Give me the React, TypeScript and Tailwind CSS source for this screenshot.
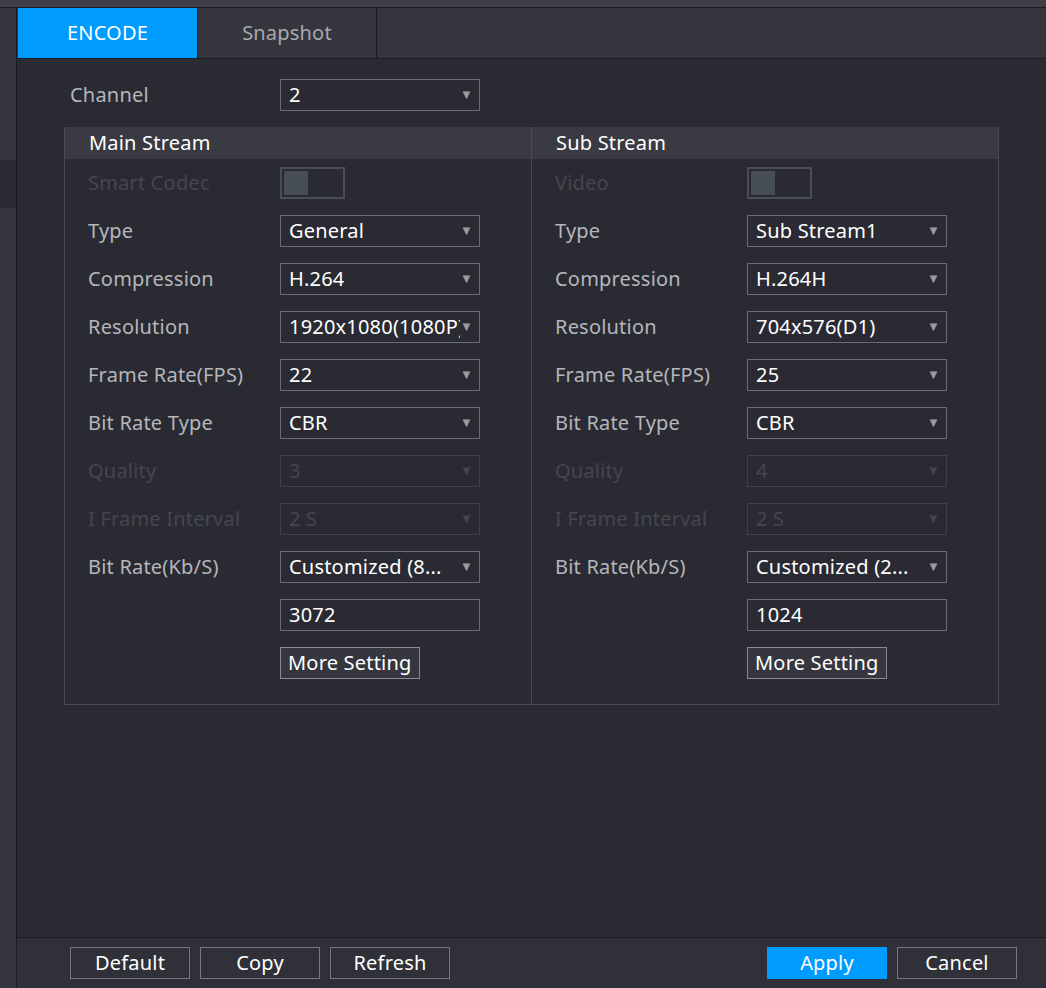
import React from 'react';

type Row = { label: string; kind: 'toggle' | 'select' | 'input' | 'button'; value?: string; disabled?: boolean };

const mainRows: Row[] = [
    { label: 'Smart Codec', kind: 'toggle', disabled: true },
    { label: 'Type', kind: 'select', value: 'General' },
    { label: 'Compression', kind: 'select', value: 'H.264' },
    { label: 'Resolution', kind: 'select', value: '1920x1080(1080P)' },
    { label: 'Frame Rate(FPS)', kind: 'select', value: '22' },
    { label: 'Bit Rate Type', kind: 'select', value: 'CBR' },
    { label: 'Quality', kind: 'select', value: '3', disabled: true },
    { label: 'I Frame Interval', kind: 'select', value: '2 S', disabled: true },
    { label: 'Bit Rate(Kb/S)', kind: 'select', value: 'Customized (8...' },
    { label: '', kind: 'input', value: '3072' },
    { label: '', kind: 'button', value: 'More Setting' },
];

const subRows: Row[] = [
    { label: 'Video', kind: 'toggle', disabled: true },
    { label: 'Type', kind: 'select', value: 'Sub Stream1' },
    { label: 'Compression', kind: 'select', value: 'H.264H' },
    { label: 'Resolution', kind: 'select', value: '704x576(D1)' },
    { label: 'Frame Rate(FPS)', kind: 'select', value: '25' },
    { label: 'Bit Rate Type', kind: 'select', value: 'CBR' },
    { label: 'Quality', kind: 'select', value: '4', disabled: true },
    { label: 'I Frame Interval', kind: 'select', value: '2 S', disabled: true },
    { label: 'Bit Rate(Kb/S)', kind: 'select', value: 'Customized (2...' },
    { label: '', kind: 'input', value: '1024' },
    { label: '', kind: 'button', value: 'More Setting' },
];

const Select = ({ value, disabled }: { value: string; disabled?: boolean }) => (
    <div className={`w-[200px] h-[32px] border flex items-center pl-[8px] pr-[6px] ${disabled ? 'border-[#3f4048] text-[#45464e]' : 'border-[#6c6d74] text-white'}`}>
        <span className="flex-1 whitespace-nowrap overflow-hidden">{value}</span>
        <span className={`text-[13px] ${disabled ? 'text-[#45464e]' : 'text-[#9a9ba1]'}`}>▼</span>
    </div>
);

const Control = ({ row }: { row: Row }) => {
    if (row.kind === 'toggle')
        return (
            <div className="w-[65px] h-[32px] border-2 border-[#4a4d55] flex p-[2px]">
                <div className="w-[24px] h-full bg-[#474d55]"></div>
            </div>
        );
    if (row.kind === 'input')
        return <div className="w-[200px] h-[32px] border border-[#6c6d74] text-white flex items-center pl-[8px]">{row.value}</div>;
    if (row.kind === 'button')
        return <div className="h-[32px] px-[7px] border border-[#8a8b91] bg-[#35363e] text-white flex items-center">{row.value}</div>;
    return <Select value={row.value!} disabled={row.disabled} />;
};

const Column = ({ title, rows, border }: { title: string; rows: Row[]; border?: boolean }) => (
    <div className={`flex-1 pb-[25px] ${border ? 'border-r border-[#4a4b52]' : ''}`}>
        <div className="h-[32px] bg-[#393a42] pl-[24px] flex items-center text-white">{title}</div>
        <div className="flex flex-col gap-[16px] pt-[8px]">
            {rows.map((r, i) => (
                <div key={i} className="flex items-center h-[32px]">
                    <div className={`w-[215px] pl-[23px] whitespace-nowrap ${r.disabled ? 'text-[#45464e]' : 'text-[#b5b6bb]'}`}>{r.label}</div>
                    <Control row={r} />
                </div>
            ))}
        </div>
    </div>
);

const Btn = ({ label, primary }: { label: string; primary?: boolean }) => (
    <div className={`w-[120px] h-[32px] flex items-center justify-center border ${primary ? 'bg-[#009bff] border-[#009bff]' : 'bg-[#2f3038] border-[#77787e]'} text-white`}>{label}</div>
);

export default function App() {
    return (
        <div className="w-[1046px] h-[988px] bg-[#35363e] flex text-[20px] tracking-[0.2px] overflow-hidden" style={{ fontFamily: '"Noto Sans", sans-serif' }}>
            <div className="w-[16px] flex flex-col pt-[160px] shrink-0">
                <div className="h-[48px] bg-[#2a2a33]"></div>
            </div>
            <div className="w-px bg-[#1c1d22]"></div>
            <div className="flex-1 flex flex-col">
                <div className="h-[8px] bg-[#3d3e46] border-b border-[#1c1d22] -ml-[17px]"></div>
                <div className="h-[51px] flex bg-[#34353d] border-b border-[#1c1d22]">
                    <div className="w-[179px] bg-[#009bff] text-white flex items-center justify-center ml-px">ENCODE</div>
                    <div className="w-[180px] text-[#a8a9ae] flex items-center justify-center border-l border-r border-[#1c1d22]">Snapshot</div>
                </div>
                <div className="flex-1 bg-[#2a2a33] pl-[47px] pr-[47px]">
                    <div className="flex items-center h-[32px] mt-[20px]">
                        <div className="w-[216px] pl-[6px] text-[#b5b6bb]">Channel</div>
                        <Select value="2" />
                    </div>
                    <div className="mt-[16px] border border-[#4a4b52] border-t-0 flex w-[935px]">
                        <Column title="Main Stream" rows={mainRows} border />
                        <Column title="Sub Stream" rows={subRows} />
                    </div>
                </div>
                <div className="h-[51px] bg-[#2f3038] border-t border-[#1c1d22] flex items-center pl-[53px] pr-[29px] gap-[10px]">
                    <Btn label="Default" />
                    <Btn label="Copy" />
                    <Btn label="Refresh" />
                    <div className="flex-1"></div>
                    <Btn label="Apply" primary />
                    <Btn label="Cancel" />
                </div>
            </div>
        </div>
    );
}
